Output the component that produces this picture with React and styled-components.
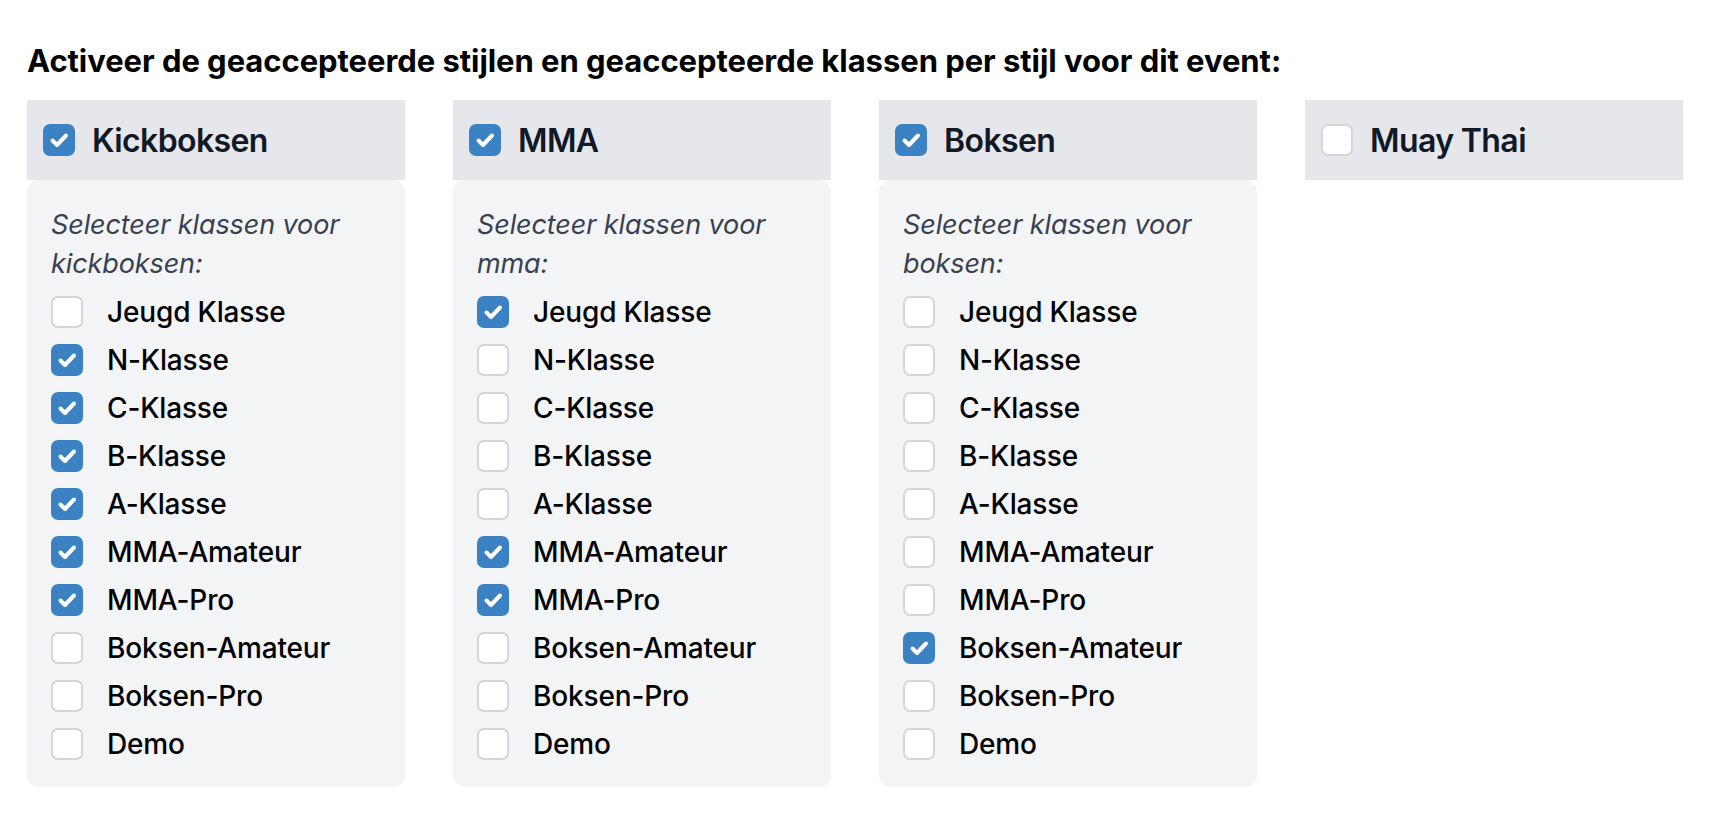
import React, { useState } from "react";
import styled, { createGlobalStyle } from "styled-components";

const GlobalStyle = createGlobalStyle`
  html, body {
    margin: 0;
    padding: 0;
    background: #ffffff;
  }
  body {
    font-family: Inter, "Noto Sans", "Liberation Sans", sans-serif;
    -webkit-font-smoothing: antialiased;
  }
`;

const Page = styled.div`
  padding: 37px 29px 0 27px;
`;

const Heading = styled.h2`
  margin: 0 0 15px 0;
  font-size: 31px;
  line-height: 48px;
  font-weight: 700;
  color: #000000;
  letter-spacing: -0.05px;
`;

const Grid = styled.div`
  display: grid;
  grid-template-columns: repeat(4, 1fr);
  column-gap: 48px;
  align-items: start;
`;

const Column = styled.div`
  display: flex;
  flex-direction: column;
`;

const StyleHeader = styled.label`
  display: flex;
  align-items: center;
  gap: 17px;
  height: 80px;
  padding: 0 16px;
  background: #e5e7eb;
  cursor: pointer;
`;

const StyleName = styled.span`
  font-size: 32px;
  font-weight: 600;
  color: #111827;
  letter-spacing: -0.6px;
`;

const ClassPanel = styled.div`
  background: #f3f4f6;
  border-radius: 12px;
  padding: 25px 24px 19px 24px;
`;

const PanelHint = styled.p`
  margin: 0 0 5px 0;
  font-size: 27px;
  line-height: 39px;
  font-style: italic;
  color: #374151;
  letter-spacing: -0.1px;
`;

const ClassRow = styled.label`
  display: flex;
  align-items: center;
  gap: 24px;
  height: 48px;
  cursor: pointer;
`;

const ClassName = styled.span`
  font-size: 28px;
  font-weight: 500;
  color: #000000;
  letter-spacing: -0.15px;
`;

const Box = styled.span`
  flex: 0 0 auto;
  width: 32px;
  height: 32px;
  box-sizing: border-box;
  border-radius: 7px;
  display: flex;
  align-items: center;
  justify-content: center;
  background: ${(p) => (p.$checked ? "#3a82c4" : "#ffffff")};
  border: ${(p) => (p.$checked ? "none" : "2px solid #d4d6db")};
`;

const Checkbox = ({ checked, onToggle }) => (
  <Box $checked={checked} onClick={onToggle}>
    {checked && (
      <svg width="32" height="32" viewBox="0 0 32 32">
        <path
          d="M9.5 16.5 L14 21 L23 11.5"
          fill="none"
          stroke="#ffffff"
          strokeWidth="4"
          strokeLinecap="round"
          strokeLinejoin="round"
        />
      </svg>
    )}
  </Box>
);

const CLASSES = [
  "Jeugd Klasse",
  "N-Klasse",
  "C-Klasse",
  "B-Klasse",
  "A-Klasse",
  "MMA-Amateur",
  "MMA-Pro",
  "Boksen-Amateur",
  "Boksen-Pro",
  "Demo",
];

const INITIAL = [
  {
    name: "Kickboksen",
    active: true,
    selected: ["N-Klasse", "C-Klasse", "B-Klasse", "A-Klasse", "MMA-Amateur", "MMA-Pro"],
  },
  {
    name: "MMA",
    active: true,
    selected: ["Jeugd Klasse", "MMA-Amateur", "MMA-Pro"],
  },
  {
    name: "Boksen",
    active: true,
    selected: ["Boksen-Amateur"],
  },
  {
    name: "Muay Thai",
    active: false,
    selected: [],
  },
];

const App = () => {
  const [styles, setStyles] = useState(INITIAL);

  const toggleStyle = (index) => {
    setStyles((prev) =>
      prev.map((s, i) => (i === index ? { ...s, active: !s.active } : s))
    );
  };

  const toggleClass = (index, cls) => {
    setStyles((prev) =>
      prev.map((s, i) => {
        if (i !== index) return s;
        const has = s.selected.includes(cls);
        return {
          ...s,
          selected: has ? s.selected.filter((c) => c !== cls) : [...s.selected, cls],
        };
      })
    );
  };

  return (
    <Page>
      <GlobalStyle />
      <Heading>
        Activeer de geaccepteerde stijlen en geaccepteerde klassen per stijl voor dit event:
      </Heading>
      <Grid>
        {styles.map((s, index) => (
          <Column key={s.name}>
            <StyleHeader>
              <Checkbox checked={s.active} onToggle={() => toggleStyle(index)} />
              <StyleName>{s.name}</StyleName>
            </StyleHeader>
            {s.active && (
              <ClassPanel>
                <PanelHint>Selecteer klassen voor {s.name.toLowerCase()}:</PanelHint>
                {CLASSES.map((cls) => (
                  <ClassRow key={cls}>
                    <Checkbox
                      checked={s.selected.includes(cls)}
                      onToggle={() => toggleClass(index, cls)}
                    />
                    <ClassName>{cls}</ClassName>
                  </ClassRow>
                ))}
              </ClassPanel>
            )}
          </Column>
        ))}
      </Grid>
    </Page>
  );
};

export default App;
